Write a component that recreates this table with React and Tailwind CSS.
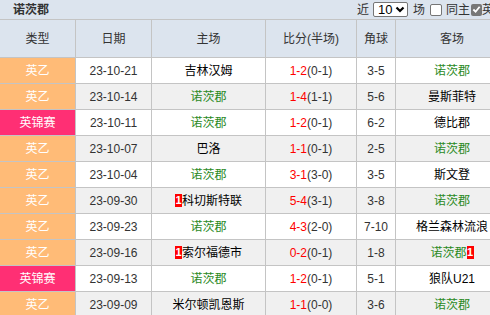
import React from 'react'

const rows = [
  { type: '英乙', date: '23-10-21', home: '吉林汉姆', score: '1-2', half: '(0-1)', corner: '3-5', away: '诺茨郡', homeUs: false },
  { type: '英乙', date: '23-10-14', home: '诺茨郡', score: '1-4', half: '(1-1)', corner: '5-6', away: '曼斯菲特', homeUs: true },
  { type: '英锦赛', date: '23-10-11', home: '诺茨郡', score: '1-2', half: '(0-1)', corner: '6-2', away: '德比郡', homeUs: true },
  { type: '英乙', date: '23-10-07', home: '巴洛', score: '1-1', half: '(0-1)', corner: '2-5', away: '诺茨郡', homeUs: false },
  { type: '英乙', date: '23-10-04', home: '诺茨郡', score: '3-1', half: '(3-0)', corner: '3-5', away: '斯文登', homeUs: true },
  { type: '英乙', date: '23-09-30', home: '科切斯特联', homeRed: 1, score: '5-4', half: '(3-1)', corner: '3-8', away: '诺茨郡', homeUs: false },
  { type: '英乙', date: '23-09-23', home: '诺茨郡', score: '4-3', half: '(2-0)', corner: '7-10', away: '格兰森林流浪', homeUs: true },
  { type: '英乙', date: '23-09-16', home: '索尔福德市', homeRed: 1, score: '0-2', half: '(0-1)', corner: '1-8', away: '诺茨郡', awayRed: 1, homeUs: false },
  { type: '英锦赛', date: '23-09-13', home: '诺茨郡', score: '1-2', half: '(0-1)', corner: '5-1', away: '狼队U21', homeUs: true },
  { type: '英乙', date: '23-09-09', home: '米尔顿凯恩斯', score: '1-1', half: '(0-0)', corner: '3-6', away: '诺茨郡', homeUs: false },
]

function RedCard({ n }) {
  return (
    <span className="inline-flex h-[13px] w-[7px] items-center justify-center bg-[#ff0000] text-[11px] font-bold leading-none text-white">
      {n}
    </span>
  )
}

function Team({ name, us, red, redAfter }) {
  return (
    <span className={`inline-flex items-center ${us ? 'text-[#2b8a1e]' : 'text-black'}`}>
      {red && !redAfter ? <RedCard n={red} /> : null}
      {name}
      {red && redAfter ? <RedCard n={red} /> : null}
    </span>
  )
}

const cell = 'flex h-[25px] items-center justify-center'

export default function App() {
  return (
    <div
      className="h-[315px] w-[490px] overflow-hidden bg-white text-[12px] text-[#333]"
      style={{ fontFamily: '"Liberation Sans", "Noto Sans CJK SC", sans-serif' }}
    >
      <div className="w-[508px]">
        <div className="flex h-[19px] items-center bg-[#dce4ee] pl-[13px]">
          <span className="w-[344px] shrink-0 font-bold text-[#333]">诺茨郡</span>
          <div className="flex shrink-0 items-center whitespace-nowrap text-[#333]">
            <span className="mr-[4px]">近</span>
            <span className="flex h-[15px] w-[35px] items-center justify-between rounded-[2px] border border-[#767676] bg-white pl-[4px] pr-[2px] text-[13px] text-black">
              10
              <svg width="10" height="7" viewBox="0 0 10 7">
                <polyline points="1.5,1.5 5,5 8.5,1.5" fill="none" stroke="#000" strokeWidth="2.2" />
              </svg>
            </span>
            <span className="ml-[5px] mr-[5px]">场</span>
            <span className="mr-[4px] h-[12px] w-[12px] rounded-[2px] border border-[#767676] bg-white" />
            <span className="mr-[1px]">同主</span>
            <span className="flex h-[12px] w-[11px] items-center justify-center rounded-[2px] bg-[#777]">
              <svg width="9" height="9" viewBox="0 0 10 10">
                <polyline points="1.5,5 4,7.5 8.5,2" fill="none" stroke="#fff" strokeWidth="2" />
              </svg>
            </span>
            <span>英乙</span>
          </div>
        </div>
        <div className="grid grid-cols-[75px_75px_113px_90px_38px_112px] gap-px border-t border-[#c4c4c4] bg-[#c4c4c4]">
          {['类型', '日期', '主场', '比分(半场)', '角球', '客场'].map((h) => (
            <div key={h} className="flex h-[37px] items-center justify-center bg-[#dce4ee] text-[#333]">
              {h}
            </div>
          ))}
          {rows.map((r, i) => {
            const bg = i % 2 === 0 ? 'bg-white' : 'bg-[#f0f0f0]'
            const typeBg = r.type === '英锦赛' ? 'bg-[#ff2f74]' : 'bg-[#ffbb77]'
            return (
              <React.Fragment key={r.date}>
                <div className={`${cell} ${typeBg} text-white`}>{r.type}</div>
                <div className={`${cell} ${bg}`}>{r.date}</div>
                <div className={`${cell} ${bg}`}>
                  <Team name={r.home} us={r.homeUs} red={r.homeRed} />
                </div>
                <div className={`${cell} ${bg}`}>
                  <span className="text-[#ff0000]">{r.score}</span>
                  <span>{r.half}</span>
                </div>
                <div className={`${cell} ${bg}`}>{r.corner}</div>
                <div className={`${cell} ${bg}`}>
                  <Team name={r.away} us={!r.homeUs} red={r.awayRed} redAfter />
                </div>
              </React.Fragment>
            )
          })}
        </div>
      </div>
    </div>
  )
}
